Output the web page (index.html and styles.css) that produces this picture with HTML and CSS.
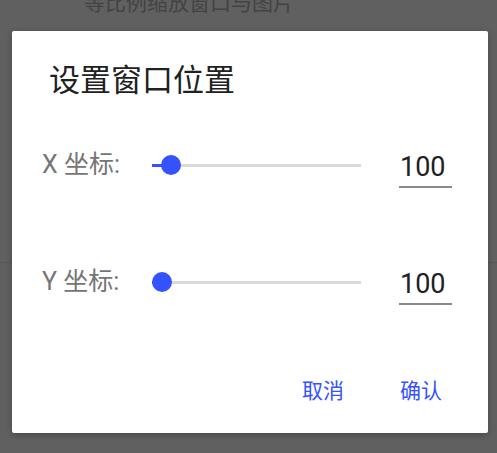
FILE: index.html
```html
<!DOCTYPE html>
<html lang="zh">
<head>
<meta charset="utf-8">
<title>设置窗口位置</title>
<link rel="stylesheet" href="styles.css">
</head>
<body>
<div class="page">
  <div class="page-title">等比例缩放窗口与图片</div>
  <div class="page-divider"></div>
</div>
<div class="dialog">
  <div class="dialog-title">设置窗口位置</div>
  <div class="row row-x">
    <div class="label">X 坐标:</div>
    <div class="slider">
      <div class="track"><div class="track-active" style="width:19px"></div></div>
      <div class="thumb" style="left:9px"></div>
    </div>
    <div class="value">100</div>
  </div>
  <div class="row row-y">
    <div class="label">Y 坐标:</div>
    <div class="slider">
      <div class="track"><div class="track-active" style="width:10px"></div></div>
      <div class="thumb" style="left:0px"></div>
    </div>
    <div class="value">100</div>
  </div>
  <div class="actions">
    <div class="btn">取消</div>
    <div class="btn">确认</div>
  </div>
</div>
</body>
</html>
```
FILE: styles.css
```css
* { box-sizing: border-box; }
html, body {
  margin: 0;
  padding: 0;
  width: 497px;
  height: 453px;
  overflow: hidden;
}
body {
  background: #606060;
  font-family: Roboto, "Noto Sans CJK SC", sans-serif;
  position: relative;
}
.page-title {
  margin-top: -9px;
  padding-left: 84px;
  font-size: 21px;
  line-height: 24px;
  color: #434343;
}
.page-divider {
  margin-top: 247px;
  height: 1px;
  background: #585858;
}
.dialog {
  position: absolute;
  left: 12px;
  top: 31px;
  width: 476px;
  background: #ffffff;
  border-radius: 2px;
  box-shadow: 0 2px 6px rgba(0,0,0,0.25);
  padding: 32px 0 30px;
}
.dialog-title {
  padding-left: 37px;
  font-size: 31px;
  line-height: 36px;
  color: #212121;
}
.row {
  display: flex;
  align-items: center;
  height: 46px;
  padding-left: 30px;
}
.row-x { margin-top: 43px; }
.row-y { margin-top: 71px; }
.label {
  width: 110px;
  font-size: 25px;
  line-height: 30px;
  color: #757575;
}
.slider {
  position: relative;
  width: 209px;
  height: 20px;
  display: flex;
  align-items: center;
}
.track {
  width: 100%;
  height: 3px;
  background: #d9d9d9;
}
.track-active {
  height: 3px;
  background: #3452ff;
}
.thumb {
  position: absolute;
  top: 0;
  width: 20px;
  height: 20px;
  border-radius: 50%;
  background: #3452ff;
}
.value {
  margin-left: 38px;
  width: 53px;
  padding: 9px 0 3px 1px;
  font-size: 27px;
  line-height: 32px;
  color: #212121;
  border-bottom: 2px solid #8a8a8a;
}
.actions {
  margin-top: 74px;
  display: flex;
  justify-content: flex-end;
  gap: 56px;
  padding-right: 46px;
}
.btn {
  font-size: 21px;
  line-height: 24px;
  color: #3452ff;
}
```
